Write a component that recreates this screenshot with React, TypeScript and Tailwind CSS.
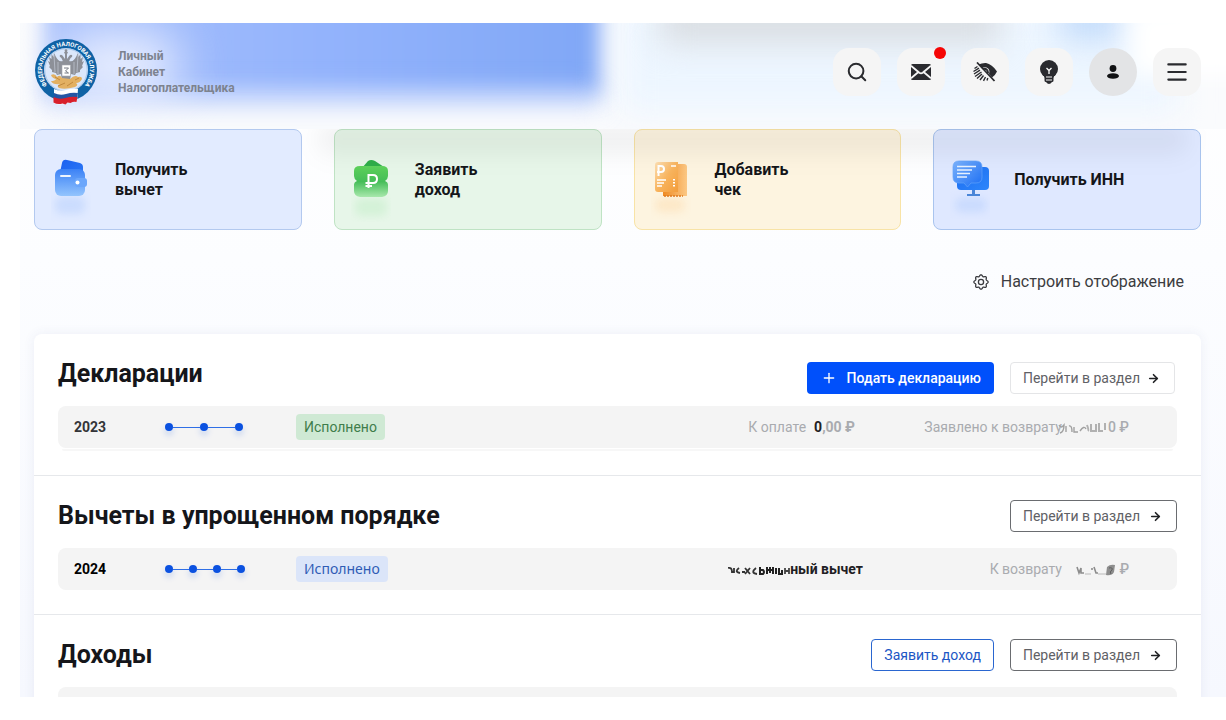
import type { ReactNode } from 'react';
import { Menu, Plus, ArrowRight, Search } from 'lucide-react';

function Logo() {
  return (
    <svg viewBox="0 0 64 68" className="h-[68px] w-16 shrink-0" role="img" aria-label="Федеральная налоговая служба">
      <defs>
        <path id="ring" d="M 18 51.500 A 24 24 0 1 1 46 51.500" />
      </defs>
      <circle cx="32" cy="32" r="31" fill="#0f62a5" />
      <circle cx="32" cy="32" r="22" fill="#dbe7fb" />
      <circle cx="32" cy="32" r="21.2" fill="none" stroke="#8db6e0" strokeWidth="0.6" />
      <text fill="#ffffff" className="font-[Roboto] text-[6px] font-bold">
        <textPath href="#ring" startOffset="50%" textAnchor="middle">ФЕДЕРАЛЬНАЯ НАЛОГОВАЯ СЛУЖБА</textPath>
      </text>
      <g fill="#8d9098">
        <path d="M31 24 C28 25 29 20 26 19 C25 17 27 16 28.500 17.500 L31 21 L31 16 L30 14.500 L31 13.500 L30.500 12 L32 11 L33.500 12 L33 13.500 L34 14.500 L33 16 L33 21 L35.500 17.500 C37 16 39 17 38 19 C35 20 36 25 33 24 Z" />
        <path d="M29 23 C25 24 24 22 22 19 L20 15 L19.500 19 L17.500 16 L17.500 21 L15 19 L16 24 L14 23 L16 28 L15 29 L18 32 L18 34 L22 35 L23 37 L27 36 L28 42 L36 42 L37 36 L41 37 L42 35 L46 34 L46 32 L49 29 L48 28 L50 23 L48 24 L49 19 L46.500 21 L46.500 16 L44.500 19 L44 15 L42 19 C40 22 39 24 35 23 Z" />
      </g>
      <path d="M20 17 L21 34 M24 24 L24 36 M44 17 L43 34 M40 24 L40 36" stroke="#cdd4e0" strokeWidth="0.6" />
      <path d="M17 37 q4 -2 6 2 q3 -3 5 1 l8 1 q5 -5 8 -2 q4 -1 4 2 q-2 4 -6 4 q3 2 -1 4 q-10 3 -16 1 q-3 -2 1 -4 q-7 1 -9 -3 q4 0 5 -2 q-4 -1 -5 -4Z" fill="#e3b062" />
      <path d="M21 39 l5 3 m-2 6 l7 -3 m2 3 l6 -4 m2 -2 l4 -2" stroke="#b77f35" strokeWidth="0.8" fill="none" />
      <rect x="28" y="27" width="8.500" height="11" fill="#ffffff" stroke="#a3a7ae" strokeWidth="0.6" />
      <path d="M30 30 h4.500 l-3 3 l3 2 h-4" stroke="#777b84" strokeWidth="1" fill="none" />
      <path d="M20 51 q6 3 12 1 q6 -2 12 -1 l-1 13 q-5 -1 -10 1 q-7 3 -13 0Z" fill="#ffffff" />
      <path d="M20 55 q6 3 12 1 q6 -2 12 -1 l-1 5 q-5 -1 -11 1 q-6 3 -12 0Z" fill="#2455a4" />
      <path d="M19.500 59 q6 3 12 1 q6 -2 12 -1 l-1 5 q-3 -1 -6 1 l-3 -0.500 l-2 2 l-3 -1 q-5 1.500 -9 -1Z" fill="#d8202c" />
    </svg>
  );
}

function MailIcon() {
  return (
    <svg viewBox="0 0 20 16" className="h-4 w-5" aria-hidden="true">
      <rect width="20" height="16" rx="1.500" fill="#2a2b2f" />
      <path d="M0 1.800 L8.300 8.800 Q10 10 11.700 8.800 L20 1.800 M0 14.200 L8 7.500 M20 14.200 L12 7.500" fill="none" stroke="#f5f5f5" strokeWidth="1.800" />
    </svg>
  );
}

function EyeOffIcon() {
  return (
    <svg viewBox="0 0 24 20" className="h-5 w-6" aria-hidden="true">
      <path d="M5.500 2.500 Q9 0.800 13 1 Q19 2 24 9.500 Q22.500 13 19 15.500 L16 12 Q17.500 7 13.500 5.500 Q10.500 5 9 6.300 Z" fill="#2a2b2f" />
      <path d="M10 7 Q14.800 6 15 11" fill="none" stroke="#2a2b2f" strokeWidth="2" />
      <path d="M1.500 6.500 L4.500 4.500 M0.500 9.500 L6 6.200 M1 12 L7 8.200 M2 14.500 L8.500 10 M4 16.500 L9 12 M7 18 L10.500 13.500 M10.500 18.800 L12.500 15 M14 18.500 L14.800 16" stroke="#2a2b2f" strokeWidth="1.400" />
      <path d="M4 0.500 L21.500 19" stroke="#2a2b2f" strokeWidth="1.800" />
    </svg>
  );
}

function BulbIcon() {
  return (
    <svg viewBox="0 0 18 24" className="h-6 w-[18px]" aria-hidden="true">
      <circle cx="9" cy="9" r="9" fill="#2a2b2f" />
      <path d="M2 14 Q4.500 16 4.500 18 V20.500 Q4.500 22 6 22 Q7.500 24 9 24 Q10.500 24 12 22 Q13.500 22 13.500 20.500 V18 Q13.500 16 16 14 Z" fill="#2a2b2f" />
      <path d="M6.500 8 L9 10.500 L11.500 8 M9 10.500 V14" fill="none" stroke="#ffffff" strokeWidth="1.300" />
      <path d="M6 17 H12 M6 20 H12" stroke="#f5f5f5" strokeWidth="1.200" />
    </svg>
  );
}

function UserIcon() {
  return (
    <svg viewBox="0 0 12 14" className="h-[14px] w-3" aria-hidden="true">
      <circle cx="6" cy="3.500" r="3.400" fill="#111214" />
      <ellipse cx="6" cy="11" rx="6" ry="2.800" fill="#111214" />
    </svg>
  );
}

const gearPath =
  Array.from({ length: 96 }, (_, i) => {
    const a = (i / 96) * Math.PI * 2;
    const r = 6.4 + 0.75 * Math.cos(8 * a);
    return `${i ? 'L' : 'M'}${(8 + r * Math.cos(a)).toFixed(2)} ${(8 + r * Math.sin(a)).toFixed(2)}`;
  }).join(' ') + ' Z';

function GearIcon() {
  return (
    <svg viewBox="0 0 16 16" className="size-4" fill="none" stroke="#3c3d41" strokeWidth="1.3" aria-hidden="true">
      <path d={gearPath} />
      <circle cx="8" cy="8" r="2.600" />
    </svg>
  );
}

function WalletArt() {
  return (
    <svg viewBox="0 0 40 64" className="h-16 w-10 shrink-0" aria-hidden="true">
      <defs>
        <linearGradient id="wBack" x1="0" y1="0" x2="1" y2="1"><stop stopColor="#1a5ff0" /><stop offset="1" stopColor="#2f7cf6" /></linearGradient>
        <linearGradient id="wFront" x1="0" y1="0" x2="0" y2="1"><stop stopColor="#3c82f6" /><stop offset="1" stopColor="#93c4fd" /></linearGradient>
        <filter id="wBlur" x="-50%" y="-50%" width="200%" height="200%"><feGaussianBlur stdDeviation="4" /></filter>
      </defs>
      <rect x="4" y="38" width="30" height="18" rx="6" fill="#b4cdfd" opacity="0.5" filter="url(#wBlur)" />
      <path d="M11 5 Q12 1 16 2 L29 5 Q32 6 32 9 V24 H7 Z" fill="url(#wBack)" />
      <rect x="4" y="11" width="30" height="27" rx="6" fill="url(#wFront)" />
      <rect x="24" y="20" width="12" height="9" rx="3" fill="#6ba6fb" />
      <circle cx="26.500" cy="24.500" r="2" fill="#ffffff" />
      <rect x="9" y="17" width="11" height="2" rx="1" fill="#eef5ff" />
    </svg>
  );
}

function RubleArt() {
  return (
    <svg viewBox="0 0 40 64" className="h-16 w-10 shrink-0" aria-hidden="true">
      <defs>
        <linearGradient id="rFront" x1="0" y1="0" x2="0" y2="1"><stop stopColor="#5ed25b" /><stop offset="0.5" stopColor="#45bd58" /><stop offset="1" stopColor="#a8e8ac" /></linearGradient>
        <filter id="rBlur" x="-50%" y="-50%" width="200%" height="200%"><feGaussianBlur stdDeviation="4" /></filter>
      </defs>
      <rect x="4" y="40" width="32" height="18" rx="6" fill="#b8ebbd" opacity="0.4" filter="url(#rBlur)" />
      <path d="M11 10 L17 3 Q20 1 24 3 L33 9 V20 H10 Z" fill="#2fae49" />
      <path d="M3 13 Q3 8 9 8 H31 Q37 8 37 13 V18 Q37 21 34 23 Q37 24 37 27 V33 Q37 38 31 39 H9 Q3 38 3 33 V27 Q3 24 6 23 Q3 21 3 18 Z" fill="url(#rFront)" />
      <path d="M17.500 30 V17 H22 Q26 17 26 21 Q26 25 22 25 H14.500 M14.500 28 H21" fill="none" stroke="#ffffff" strokeWidth="2" />
    </svg>
  );
}

function ReceiptArt() {
  return (
    <svg viewBox="0 0 40 64" className="h-16 w-10 shrink-0" aria-hidden="true">
      <defs>
        <linearGradient id="cFront" x1="0" y1="0" x2="1" y2="1"><stop stopColor="#fde0b4" /><stop offset="0.5" stopColor="#f8b45e" /><stop offset="1" stopColor="#f39d3b" /></linearGradient>
        <linearGradient id="cBack" x1="0" y1="0" x2="1" y2="0"><stop stopColor="#ef8a22" /><stop offset="1" stopColor="#fcc884" /></linearGradient>
        <filter id="cBlur" x="-50%" y="-50%" width="200%" height="200%"><feGaussianBlur stdDeviation="4" /></filter>
      </defs>
      <rect x="4" y="40" width="30" height="14" rx="6" fill="#fddcae" opacity="0.5" filter="url(#cBlur)" />
      <path d="M12 8 Q12 6 14 6 H33 Q36 6 36 9 V38 H12 Z" fill="url(#cBack)" />
      <path d="M13 38 H32" stroke="#e07a1c" strokeWidth="1.500" strokeDasharray="2 1" />
      <path d="M4 7 Q4 4 7 4 H27 V34 H7 Q4 34 4 31 Z" fill="url(#cFront)" />
      <path d="M7.500 18 V8 H10 Q13 8 13 11 Q13 14 10 14 H6" fill="none" stroke="#ffffff" strokeWidth="2" />
      <path d="M6 22 H15 M6 25 H13 M6 28 H11 M20 8 H25" stroke="#ffffff" strokeWidth="1.400" />
      <path d="M23 21 V30" stroke="#ffffff" strokeWidth="2" strokeDasharray="1.500 1.500" />
    </svg>
  );
}

function MonitorArt() {
  return (
    <svg viewBox="0 0 40 64" className="h-16 w-10 shrink-0" aria-hidden="true">
      <defs>
        <linearGradient id="mBack" x1="0" y1="0" x2="1" y2="1"><stop stopColor="#1c6cf0" /><stop offset="1" stopColor="#2d86fb" /></linearGradient>
        <linearGradient id="mFront" x1="0" y1="0" x2="1" y2="1"><stop stopColor="#7cb3fd" /><stop offset="1" stopColor="#1a6df3" /></linearGradient>
        <filter id="mBlur" x="-50%" y="-50%" width="200%" height="200%"><feGaussianBlur stdDeviation="4" /></filter>
      </defs>
      <rect x="5" y="40" width="32" height="14" rx="6" fill="#b4cdfd" opacity="0.5" filter="url(#mBlur)" />
      <rect x="7" y="9" width="32" height="23" rx="4" fill="url(#mBack)" />
      <path d="M22 32 H25 V36 H30 V38 H17 V36 H22 Z" fill="#4a86d8" />
      <path d="M3 9 Q3 3 9 3 H26 Q32 3 32 9 V19 Q32 25 26 25 H21 L17.500 29 L14 25 H9 Q3 25 3 19 Z" fill="url(#mFront)" stroke="#62a3fb" strokeWidth="0.700" />
      <path d="M7 8.500 H26 M7 12 H22 M7 15.500 H20 M7 19 H17" stroke="#e8f2ff" strokeWidth="1.700" />
    </svg>
  );
}

function SmudgedSum() {
  return (
    <svg viewBox="0 0 50 14" className="-ml-1 inline-block h-[14px] w-[50px] align-middle" aria-hidden="true">
      <path d="M1 4 Q3 8 6 4 Q6 11 2 12 M8 5 V11 M11 5 Q14 4 14 11 M16 6 V11 H20 M22 10 Q26 4 28 8" fill="none" stroke="#a0a0a0" strokeWidth="1.400" />
      <path d="M29 4 Q31 9 30 10 M33 3 V10 H37 M38 3 V11 M41 2 V10 H45 M47 2 V9" fill="none" stroke="#b1b1b1" strokeWidth="2" />
    </svg>
  );
}

function SmudgedWord() {
  return (
    <svg viewBox="0 0 62 14" className="inline-block h-[14px] w-[62px] align-middle" aria-hidden="true">
      <path d="M0 5 Q4 4 4 9 H6 V5 M11 5 Q6 9 12 10 M14 9 H17 M17 5 L22 11 M22 5 L17 11 M28 5 Q22 10 29 11" fill="none" stroke="#333333" strokeWidth="1.800" />
      <path d="M32 4 V11 H35 Q37 9 35 7 H32 M39 4 V11 M42 4 V10 M45 4 V11 M48 5 V11 M39 7 H44 M51 5 V11 H54 V7" fill="none" stroke="#222222" strokeWidth="2" />
      <path d="M57 5 V11 M61 5 V11 M57 8 H61" fill="none" stroke="#444444" strokeWidth="1.800" />
    </svg>
  );
}

function SmudgedRefund() {
  return (
    <svg viewBox="0 0 40 14" className="inline-block h-[14px] w-10 align-middle" aria-hidden="true">
      <path d="M1 4 L3 10 L5 5 V10 H8 M16 5 V7 M18 4 L20 10 H22" fill="none" stroke="#8c8c8c" strokeWidth="1.600" />
      <path d="M9 11 H15 M22 11 H30" fill="none" stroke="#b9b9b9" strokeWidth="1.200" />
      <path d="M31 4 Q34 1 39 2 L38 9 Q36 13 30 12 Z" fill="#8d8d8d" />
      <path d="M33 5 Q37 4 36 7 Q33 9 35 11" fill="none" stroke="#5d5d5d" strokeWidth="1" />
    </svg>
  );
}

function IconButton({ label, round, dot, children }: { label: string; round?: boolean; dot?: boolean; children: ReactNode }) {
  return (
    <button
      type="button"
      aria-label={label}
      className={`relative flex size-12 items-center justify-center ${round ? 'rounded-full bg-[#e3e4e6]' : 'rounded-2xl bg-[#f5f5f5]'}`}
    >
      {children}
      {dot && <span className="absolute -top-px -right-px size-3 rounded-full bg-[#f50505]" />}
    </button>
  );
}

function ActionCard({ art, tone, children }: { art: ReactNode; tone: string; children: ReactNode }) {
  return (
    <a href="#" className={`flex h-[101px] items-center rounded-lg border pl-4 text-base leading-5 font-bold text-[#15161a] ${tone}`}>
      <span className="flex w-16 pt-5">{art}</span>
      <span className="w-[120px]">{children}</span>
    </a>
  );
}

function Steps({ count, gap }: { count: number; gap: string }) {
  return (
    <span className="flex items-center">
      {Array.from({ length: count }, (_, i) => (
        <span key={i} className="flex items-center">
          {i > 0 && <span className={`h-px bg-[#2f6fe6] ${gap}`} />}
          <span className="size-2 rounded-full bg-[#0b51e0] shadow-[0_4px_6px_rgba(11,81,224,0.2)]" />
        </span>
      ))}
    </span>
  );
}

function SectionLink({ light }: { light?: boolean }) {
  return (
    <a
      href="#"
      className={`flex h-8 items-center rounded-[4px] border bg-white pl-3 text-sm text-[#5f6166] ${light ? 'mr-[2px] gap-[7px] border-[#e4e5e7] pr-[14px]' : 'gap-[9px] border-[#6a6c70] pr-[14px]'}`}
    >
      Перейти в раздел
      <ArrowRight className="size-[13px] text-[#1f2023]" strokeWidth={3} aria-hidden="true" />
    </a>
  );
}

function Row({ year, yearTone, steps, badge, badgeTone, children }: { year: string; yearTone: string; steps: ReactNode; badge: string; badgeTone: string; children: ReactNode }) {
  return (
    <div className="flex h-[42px] items-center rounded-lg bg-[#f4f4f4] pr-12 pl-4 text-sm">
      <span className={`w-[91px] font-bold ${yearTone}`}>{year}</span>
      <span className="w-[131px]">{steps}</span>
      <span className={`flex h-[26px] items-center rounded-[4px] px-2 ${badgeTone}`}>{badge}</span>
      <div className="flex flex-1 justify-end whitespace-nowrap text-[#a9abaf]">{children}</div>
    </div>
  );
}

export default function App() {
  return (
    <div className="flex h-screen flex-col bg-white py-[23px] pl-5 font-[Roboto,sans-serif]">
      <div className="flex-1 overflow-hidden bg-[linear-gradient(180deg,#ffffff_0%,#fcfdff_35%,#f6f8fe_100%)]">
        <header className="relative flex h-[106px] items-start justify-between overflow-hidden bg-[#fafbfd] pr-[25px] pl-[14px]">
          <div className="pointer-events-none absolute inset-0" aria-hidden="true">
            <div className="absolute -top-5 left-[600px] h-[110px] w-[560px] bg-[#edf6ff] blur-lg" />
            <div className="absolute -top-10 left-[24px] h-[112px] w-[556px] bg-linear-to-r from-[#a9c1fc] via-[#93b3fc] to-[#80a7f6] blur-[10px]" />
            <div className="absolute top-16 left-[24px] h-5 w-[556px] bg-[#b4c9fd]/60 blur-md" />
            <div className="absolute top-2 left-[40px] h-[70px] w-[120px] rounded-full bg-[#f1f5ff]/90 blur-xl" />
            <div className="absolute -top-6 left-[640px] h-[44px] w-[340px] bg-[#d9dde2] blur-lg" />
            <div className="absolute -top-6 left-[1040px] h-[40px] w-[60px] bg-[#c0dafb] blur-lg" />
            <div className="absolute -top-4 left-[1110px] h-[70px] w-[120px] bg-white blur-md" />
          </div>
          <div className="relative flex pt-[15px]">
            <Logo />
            <p className="pt-[10px] pl-5 text-xs leading-4 font-bold text-[#7d838f]">
              Личный
              <br />
              Кабинет
              <br />
              Налогоплательщика
            </p>
          </div>
          <nav className="relative flex gap-4 pt-[25px]" aria-label="Главное меню">
            <IconButton label="Поиск"><Search className="size-[22px] text-[#2a2b2f]" strokeWidth={2.2} /></IconButton>
            <IconButton label="Сообщения" dot><MailIcon /></IconButton>
            <IconButton label="Версия для слабовидящих"><EyeOffIcon /></IconButton>
            <IconButton label="Подсказки"><BulbIcon /></IconButton>
            <IconButton label="Профиль" round><UserIcon /></IconButton>
            <IconButton label="Меню"><Menu className="size-[26px] text-[#2a2b2f]" strokeWidth={2} /></IconButton>
          </nav>
        </header>

        <main className="relative pr-[25px] pl-[14px]">
          <div className="pointer-events-none absolute inset-x-0 top-0 h-12 overflow-hidden" aria-hidden="true">
            <div className="mr-10 ml-[300px] h-8 bg-linear-to-b from-black/10 to-transparent blur-md" />
          </div>
          <div className="grid grid-cols-4 gap-8">
            <ActionCard art={<WalletArt />} tone="border-[#b3c9ef] bg-[#dfe9ff]/90">Получить<br />вычет</ActionCard>
            <ActionCard art={<RubleArt />} tone="border-[#bfe3c4] bg-[#e4f5e7]/90">Заявить<br />доход</ActionCard>
            <ActionCard art={<ReceiptArt />} tone="border-[#f8e3a6] bg-[#fdf3dd]/90">Добавить<br />чек</ActionCard>
            <ActionCard art={<MonitorArt />} tone="border-[#a9c4ee] bg-[#dbe6ff]/90">Получить ИНН</ActionCard>
          </div>

          <div className="flex h-[104px] items-center justify-end pr-[17px]">
            <button type="button" className="flex items-center gap-3 text-base text-[#3c3d41]">
              <GearIcon />
              Настроить отображение
            </button>
          </div>

          <div className="rounded-t-lg bg-white shadow-[0_0_12px_rgba(60,80,140,0.08)]">
            <section className="border-b border-[#e6e8eb] px-6 pt-7 pb-6">
              <div className="mb-3 flex items-center justify-between">
                <h2 className="pb-2 text-[25px] leading-6 font-bold text-[#15161a]">Декларации</h2>
                <div className="flex gap-4">
                  <button type="button" className="flex h-8 items-center gap-[10px] rounded-[4px] bg-[#0050fb] pr-[13px] pl-[14px] text-sm font-medium text-white">
                    <Plus className="size-4" strokeWidth={2} aria-hidden="true" />
                    Подать декларацию
                  </button>
                  <SectionLink light />
                </div>
              </div>
              <Row year="2023" yearTone="text-[#333438]" steps={<Steps count={3} gap="w-[27px]" />} badge="Исполнено" badgeTone="bg-[#cfe9d4] text-[#3f7d4b]">
                <span className="flex gap-2">
                  К оплате <b className="font-bold"><span className="text-[#1f2023]">0</span>,00 ₽</b>
                </span>
                <span className="w-[274px] text-right">
                  Заявлено к возврату<SmudgedSum /><b className="font-medium">0 ₽</b>
                </span>
              </Row>
              <div className="mx-1 mt-px h-[2px] rounded-b-lg bg-[#f7f7f7]" />
            </section>

            <section className="border-b border-[#e6e8eb] px-6 py-6">
              <div className="mb-4 flex items-center justify-between">
                <h2 className="text-[25px] leading-8 font-bold text-[#15161a]">Вычеты в упрощенном порядке</h2>
                <SectionLink />
              </div>
              <Row year="2024" yearTone="text-black" steps={<Steps count={4} gap="w-4" />} badge="Исполнено" badgeTone="bg-[#dbe5f9] font-['Noto_Sans'] text-[#2f5cb5]">
                <b className="font-bold text-[#1f2023]"><SmudgedWord />ный вычет</b>
                <span className="w-[266px] text-right">
                  К возврату&nbsp; &nbsp; <SmudgedRefund /> <b className="font-medium">₽</b>
                </span>
              </Row>
            </section>

            <section className="px-6 pt-6">
              <div className="mb-4 flex items-center justify-between">
                <h2 className="text-[25px] leading-8 font-bold text-[#15161a]">Доходы</h2>
                <div className="flex gap-4">
                  <button type="button" className="h-8 rounded-[4px] border border-[#2a66d0] bg-white px-3 text-sm text-[#1c56c4]">
                    Заявить доход
                  </button>
                  <SectionLink />
                </div>
              </div>
              <div className="h-[42px] rounded-lg bg-[#f4f4f4]" />
            </section>
          </div>
        </main>
      </div>
    </div>
  );
}
